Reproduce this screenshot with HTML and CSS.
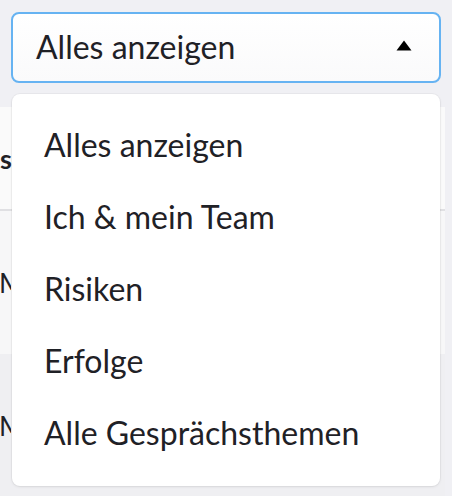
FILE: index.html
```html
<!DOCTYPE html>
<html lang="de">
<head>
<meta charset="utf-8">
<link rel="stylesheet" href="styles.css">
</head>
<body>
<div class="page">
  <div class="select">
    <span class="select-label">Alles anzeigen</span>
    <svg class="caret" width="16" height="11" viewBox="0 0 16 11"><path d="M8 0.5 L15.5 10.5 L0.5 10.5 Z" fill="#000"/></svg>
  </div>
  <div class="table">
    <div class="thead"><span class="th">s</span></div>
    <div class="row row-a"><span class="td">Me</span></div>
    <div class="row row-b"><span class="td">Me</span></div>
  </div>
  <ul class="menu">
    <li class="item">Alles anzeigen</li>
    <li class="item">Ich &amp; mein Team</li>
    <li class="item">Risiken</li>
    <li class="item">Erfolge</li>
    <li class="item">Alle Gesprächsthemen</li>
  </ul>
</div>
</body>
</html>
```
FILE: styles.css
```css
* { box-sizing: border-box; }
html, body {
  margin: 0;
  padding: 0;
  background: #f0f0f4;
  font-family: Lato, "Open Sans", sans-serif;
  color: #1f2126;
  overflow: hidden;
}
.page {
  position: relative;
  width: 452px;
  height: 496px;
  padding-top: 12px;
}
.select {
  margin: 0 11px;
  height: 71px;
  border: 2px solid #66b3f2;
  border-radius: 8px;
  background: linear-gradient(#ffffff, #fafafb);
  display: flex;
  align-items: center;
  justify-content: space-between;
  padding: 0 27px 0 23px;
}
.select-label {
  font-size: 32px;
  line-height: 1;
  padding-bottom: 2px;
}
.caret { display: block; margin-top: -4px; }
.table {
  margin-top: 24px;
  width: 445px;
  background: #fafafa;
}
.thead {
  height: 104px;
  border-bottom: 2px solid #e0e0e3;
  display: flex;
  align-items: center;
}
.th {
  display: block;
  width: 12px;
  overflow: hidden;
  font-weight: 700;
  font-size: 27px;
  margin-top: 0;
}
.row {
  height: 143px;
  display: flex;
  align-items: center;
}
.row-a { background: #f7f7f8; }
.row-b { background: #efeff2; }
.td {
  display: block;
  width: 12px;
  overflow: hidden;
  white-space: nowrap;
  font-size: 27px;
  margin-left: -1px;
}
.menu {
  position: absolute;
  top: 94px;
  left: 12px;
  width: 428px;
  height: 392px;
  margin: 0;
  padding: 14px 0 0 0;
  list-style: none;
  background: #fff;
  border-radius: 8px;
  box-shadow: 0 1px 3px rgba(0,0,0,0.08), 0 0 0 1px rgba(0,0,0,0.03);
}
.item {
  height: 72px;
  display: flex;
  align-items: center;
  padding-left: 32px;
  font-size: 32px;
  color: #1f2126;
}
```
